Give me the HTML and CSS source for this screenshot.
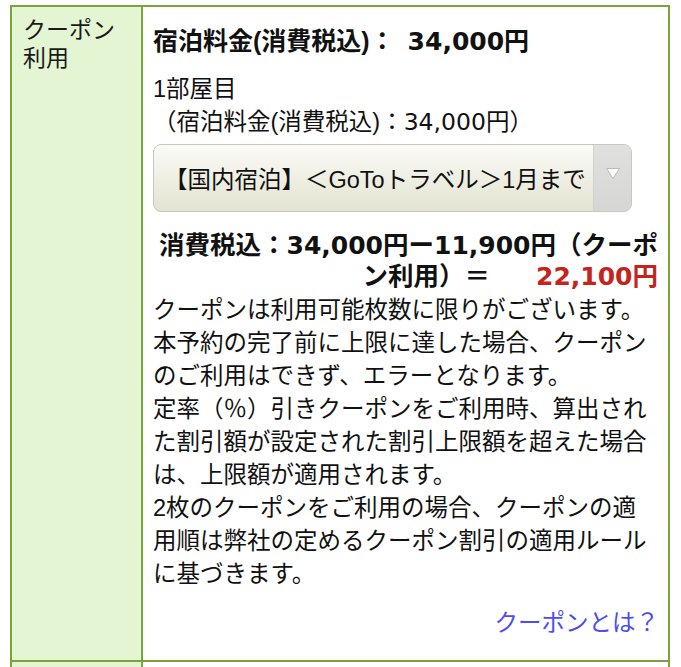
FILE: index.html
```html
<!DOCTYPE html>
<html lang="ja">
<head>
<meta charset="utf-8">
<link rel="stylesheet" href="styles.css">
</head>
<body>
<div class="wrap">
  <div class="table">
    <div class="row">
      <div class="label">クーポン<br>利用</div>
      <div class="cell">
        <div class="title">宿泊料金(消費税込)： <span class="numb gap">34,000</span>円</div>
        <div class="room">1部屋目</div>
        <div class="room-price">（宿泊料金(消費税込)：<span class="numr">34,000</span>円）</div>
        <div class="select">
          <div class="select-text">【国内宿泊】＜GoToトラベル＞1月まで</div>
          <div class="select-arrow"><svg width="16" height="13" viewBox="0 0 16 13"><path d="M1.5 1.5 L14.5 1.5 L8 11.5 Z" fill="#ffffff" stroke="#b9b9b9" stroke-width="1"/></svg></div>
        </div>
        <div class="calc">消費税込：<span class="numb">34,000</span>円ー<span class="numb">11,900</span>円（クーポ<br>ン利用）＝<span class="total"><span class="numb">22,100</span>円</span></div>
        <div class="notes">クーポンは利用可能枚数に限りがございます。<br>本予約の完了前に上限に達した場合、クーポン<br>のご利用はできず、エラーとなります。<br>定率（％）引きクーポンをご利用時、算出され<br>た割引額が設定された割引上限額を超えた場合<br>は、上限額が適用されます。<br>2枚のクーポンをご利用の場合、クーポンの適<br>用順は弊社の定めるクーポン割引の適用ルール<br>に基づきます。</div>
        <div class="link-row"><a class="link" href="#">クーポンとは？</a></div>
      </div>
    </div>
    <div class="row">
      <div class="label">&nbsp;</div>
      <div class="cell">&nbsp;</div>
    </div>
  </div>
</div>
</body>
</html>
```
FILE: styles.css
```css
html, body {
  margin: 0;
  padding: 0;
  background: #ffffff;
}
body {
  font-family: "Liberation Sans", "Noto Sans CJK JP", sans-serif;
  color: #111111;
  font-size: 23.5px;
}
.wrap {
  padding: 5px 11px 0 10px;
}
.table {
  border-top: 2px solid #7aa33c;
  border-left: 2px solid #7aa33c;
  border-right: 2px solid #7aa33c;
}
.row {
  display: grid;
  grid-template-columns: 131px 1fr;
  border-bottom: 2px solid #7aa33c;
}
.label {
  background: #e3f5d2;
  border-right: 2px solid #7aa33c;
  padding: 9px 4px 0 11px;
  line-height: 28px;
  font-size: 23px;
  color: #1a1a1a;
}
.cell {
  padding: 8px 4px 20px 10px;
  background: #ffffff;
}
.title {
  font-weight: bold;
  font-size: 25px;
  line-height: 33px;
  margin-top: 10px;
}
.numb {
  font-family: "DejaVu Sans", sans-serif;
  font-weight: bold;
}
.numr {
  font-family: "DejaVu Sans", sans-serif;
}
.gap {
  margin-left: 6px;
}
.room {
  line-height: 33px;
  margin-top: 15px;
}
.room-price {
  line-height: 33px;
}
.select {
  margin-top: 5px;
  height: 66px;
  border: 1px solid #c8c8c0;
  border-radius: 8px;
  background: linear-gradient(#fbfbf6, #e2e3d1);
  display: flex;
  align-items: stretch;
  width: 477px;
  overflow: hidden;
}
.select-text {
  flex: 1;
  display: flex;
  align-items: center;
  padding-left: 10px;
  white-space: nowrap;
  overflow: hidden;
}
.select-arrow {
  width: 38px;
  background: linear-gradient(#e0e0de, #d6d6d4);
  border-left: 1px solid #d0d0cc;
  display: flex;
  justify-content: center;
  padding-top: 22px;
  box-sizing: border-box;
}
.calc {
  margin-top: 18px;
  font-weight: bold;
  font-size: 25.5px;
  line-height: 31px;
  text-align: right;
  padding-right: 6px;
}
.calc .numb {
  font-size: 25px;
}
.total {
  color: #c4241c;
  margin-left: 46px;
}
.notes {
  margin-top: 2px;
  line-height: 33px;
}
.link-row {
  margin-top: 16px;
  text-align: right;
  line-height: 33px;
  padding-right: 5px;
}
.link {
  color: #4b4ef0;
  text-decoration: none;
}
```
